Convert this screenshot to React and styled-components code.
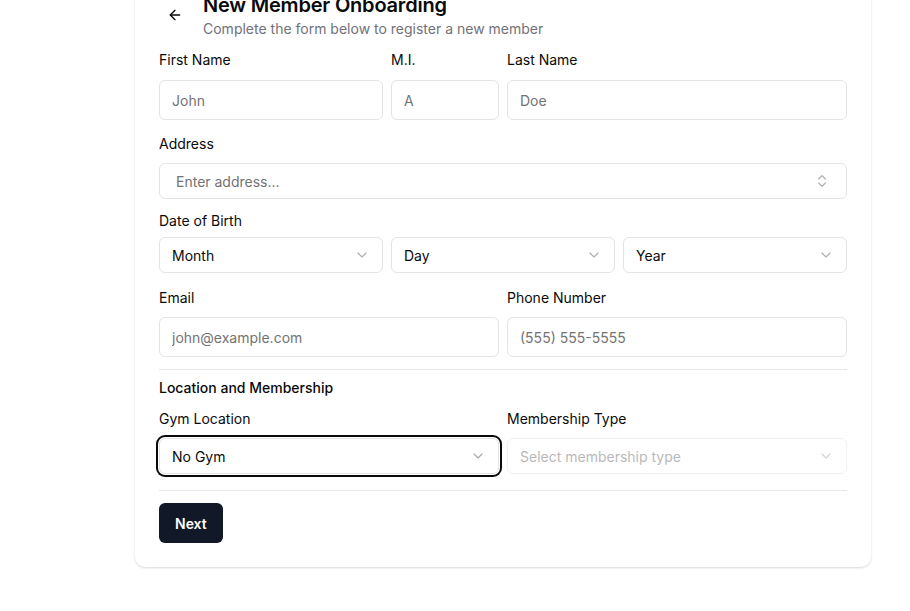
import styled, { createGlobalStyle } from 'styled-components';
import { ArrowLeft, ChevronDown, ChevronsUpDown } from 'lucide-react';

const GlobalStyle = createGlobalStyle`
  * { box-sizing: border-box; }
  body {
    margin: 0;
    background: #ffffff;
    font-family: Inter, "Noto Sans", "Liberation Sans", sans-serif;
    color: #0a0a0a;
    overflow: hidden;
  }
`;

const Page = styled.div`
  padding: 0 39px 40px 135px;
`;

const Card = styled.div`
  width: 736px;
  margin-top: -33px;
  padding: 24px;
  background: #fff;
  border-radius: 10px;
  box-shadow: 0 1px 3px rgba(0, 0, 0, 0.1), 0 1px 2px rgba(0, 0, 0, 0.06);
`;

const Header = styled.div`
  display: flex;
  align-items: center;
  gap: 12px;
  margin-bottom: 11px;
`;

const BackButton = styled.button`
  width: 32px;
  height: 32px;
  display: flex;
  align-items: center;
  justify-content: center;
  border: none;
  background: transparent;
  color: #0a0a0a;
  padding: 0;
  cursor: pointer;
`;

const Title = styled.h1`
  margin: 0;
  font-size: 20px;
  line-height: 28px;
  font-weight: 600;
  letter-spacing: -0.01em;
`;

const Subtitle = styled.p`
  margin: 0;
  font-size: 14px;
  line-height: 20px;
  color: #71717a;
`;

const Grid = styled.div`
  display: grid;
  grid-template-columns: ${(p) => p.$cols};
  gap: 8px;
  margin-top: ${(p) => p.$mt || 0}px;
`;

const Field = styled.div`
  display: flex;
  flex-direction: column;
  gap: ${(p) => p.$gap}px;
  margin-top: ${(p) => p.$mt || 0}px;
`;

const Label = styled.label`
  font-size: 14px;
  line-height: 20px;
  font-weight: 400;
  color: #0a0a0a;
`;

const SectionTitle = styled.h3`
  margin: 8px 0 0;
  font-size: 14px;
  line-height: 20px;
  font-weight: 500;
`;

const Input = styled.input`
  height: 40px;
  width: 100%;
  border: 1px solid #e4e4e7;
  border-radius: 6px;
  padding: 0 12px;
  font: inherit;
  font-size: 14px;
  color: #0a0a0a;
  background: #fff;
  outline: none;
  &::placeholder { color: #737373; }
`;

const Select = styled.div`
  height: 36px;
  display: flex;
  align-items: center;
  justify-content: space-between;
  padding: 0 ${(p) => p.$pad || 12}px;
  border: 1px solid #e4e4e7;
  border-radius: 6px;
  background: #fff;
  font-size: 14px;
  color: ${(p) => (p.$muted ? '#737373' : '#0a0a0a')};
  opacity: ${(p) => (p.$disabled ? 0.5 : 1)};
  box-shadow: ${(p) => (p.$focused ? '0 0 0 1px #fff, 0 0 0 3px #0a0a0a' : 'none')};
  svg { color: #737373; opacity: 0.6; }
`;

const Divider = styled.hr`
  border: none;
  border-top: 1px solid #e5e7eb;
  margin: ${(p) => p.$mt}px 0 0;
`;

const Button = styled.button`
  margin-top: 12px;
  height: 40px;
  padding: 0 16px;
  border: none;
  border-radius: 6px;
  background: #111827;
  color: #fff;
  font: inherit;
  font-size: 14px;
  font-weight: 600;
  align-self: flex-start;
`;

const Form = styled.div`
  display: flex;
  flex-direction: column;
`;

const Chev = () => <ChevronDown size={16} strokeWidth={1.75} />;

export default function App() {
  return (
    <>
      <GlobalStyle />
      <Page>
        <Card>
          <Header>
            <BackButton>
              <ArrowLeft size={16} strokeWidth={2} />
            </BackButton>
            <div>
              <Title>New Member Onboarding</Title>
              <Subtitle>Complete the form below to register a new member</Subtitle>
            </div>
          </Header>
          <Form>
            <Grid $cols="224px 108px 1fr">
              <Field $gap={10}>
                <Label>First Name</Label>
                <Input placeholder="John" />
              </Field>
              <Field $gap={10}>
                <Label>M.I.</Label>
                <Input placeholder="A" />
              </Field>
              <Field $gap={10}>
                <Label>Last Name</Label>
                <Input placeholder="Doe" />
              </Field>
            </Grid>
            <Field $gap={9} $mt={14}>
              <Label>Address</Label>
              <Select $pad={16} $muted>
                <span>Enter address...</span>
                <ChevronsUpDown size={16} strokeWidth={1.75} />
              </Select>
            </Field>
            <Field $gap={6} $mt={12}>
              <Label>Date of Birth</Label>
              <Grid $cols="1fr 1fr 1fr">
                <Select>
                  <span>Month</span>
                  <Chev />
                </Select>
                <Select>
                  <span>Day</span>
                  <Chev />
                </Select>
                <Select>
                  <span>Year</span>
                  <Chev />
                </Select>
              </Grid>
            </Field>
            <Grid $cols="1fr 1fr" $mt={15}>
              <Field $gap={9}>
                <Label>Email</Label>
                <Input placeholder="john@example.com" />
              </Field>
              <Field $gap={9}>
                <Label>Phone Number</Label>
                <Input placeholder="(555) 555-5555" />
              </Field>
            </Grid>
            <Divider $mt={12} />
            <SectionTitle>Location and Membership</SectionTitle>
            <Grid $cols="1fr 1fr" $mt={11}>
              <Field $gap={9}>
                <Label>Gym Location</Label>
                <Select $focused>
                  <span>No Gym</span>
                  <Chev />
                </Select>
              </Field>
              <Field $gap={9}>
                <Label>Membership Type</Label>
                <Select $disabled $muted>
                  <span>Select membership type</span>
                  <Chev />
                </Select>
              </Field>
            </Grid>
            <Divider $mt={16} />
            <Button>Next</Button>
          </Form>
        </Card>
      </Page>
    </>
  );
}
